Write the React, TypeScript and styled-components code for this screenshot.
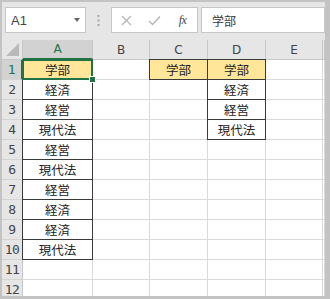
import React from "react";
import styled, { createGlobalStyle, css } from "styled-components";

const GlobalStyle = createGlobalStyle`
  html, body { margin: 0; padding: 0; background: #ffffff; }
  body { font-family: "Noto Sans CJK JP", "Noto Sans", sans-serif; }
`;

const GREEN = "#217346";

const Frame = styled.div`
  box-sizing: border-box;
  width: 330px;
  height: 299px;
  border-style: solid;
  border-color: #c3c3c3;
  border-width: 2px 5px 3px 2px;
  background: #e6e6e6;
  display: flex;
  flex-direction: column;
  overflow: hidden;
`;

const FormulaBar = styled.div`
  box-sizing: border-box;
  height: 38px;
  flex: none;
  display: flex;
  align-items: flex-start;
  padding: 5px 0 0 3px;
`;

const Box = styled.div<{ $w: number }>`
  box-sizing: border-box;
  width: ${(p) => p.$w}px;
  height: 26px;
  background: #ffffff;
  border: 1px solid #c6c6c6;
  display: flex;
  align-items: center;
  flex: none;
`;

const NameText = styled.span`
  font-family: "Liberation Sans", Arial, sans-serif;
  font-size: 13px;
  color: #444;
  padding-left: 5px;
  flex: 1;
`;

const Caret = styled.span`
  width: 0;
  height: 0;
  border-left: 3.5px solid transparent;
  border-right: 3.5px solid transparent;
  border-top: 4px solid #666;
  margin-right: 5px;
`;

const Dots = styled.div`
  width: 25px;
  height: 26px;
  flex: none;
  display: flex;
  align-items: center;
  justify-content: center;
`;

const IconSlot = styled.span<{ $w: number }>`
  width: ${(p) => p.$w}px;
  display: flex;
  align-items: center;
  justify-content: center;
  flex: none;
`;

const Fx = styled.span`
  font-family: "Liberation Serif", "Times New Roman", serif;
  font-style: italic;
  font-size: 12px;
  color: #444;
  letter-spacing: -0.5px;
`;

const Gap = styled.div<{ $w: number }>`
  width: ${(p) => p.$w}px;
  flex: none;
`;

const FormulaText = styled.span`
  font-size: 12px;
  color: #333;
  padding-left: 10px;
`;

const Sheet = styled.div`
  display: grid;
  grid-template-columns: 21px 70px 57px 58px 58px 57px 1fr;
  grid-auto-rows: 20px;
  background: #ffffff;
  flex: 1;
`;

const Corner = styled.div`
  position: relative;
  box-sizing: border-box;
  background: #e6e6e6;
  border-right: 1px solid #c8c8c8;
  border-bottom: 1px solid #c8c8c8;
  &::after {
    content: "";
    position: absolute;
    right: 3px;
    bottom: 3px;
    width: 0;
    height: 0;
    border-left: 13px solid transparent;
    border-bottom: 13px solid #b9b9b9;
  }
`;

const ColHead = styled.div<{ $sel?: boolean }>`
  box-sizing: border-box;
  display: flex;
  align-items: center;
  justify-content: center;
  font-family: "DejaVu Sans", "Liberation Sans", sans-serif;
  font-size: 12px;
  color: ${(p) => (p.$sel ? GREEN : "#444")};
  background: ${(p) => (p.$sel ? "#d2d2d2" : "#e6e6e6")};
  border-right: 1px solid #c8c8c8;
  border-bottom: ${(p) => (p.$sel ? `2px solid ${GREEN}` : "1px solid #c8c8c8")};
`;

const RowHead = styled.div<{ $sel?: boolean }>`
  box-sizing: border-box;
  display: flex;
  align-items: center;
  justify-content: center;
  font-family: "DejaVu Sans Mono", "Liberation Mono", monospace;
  font-size: 13px;
  letter-spacing: -0.5px;
  color: ${(p) => (p.$sel ? GREEN : "#444")};
  background: ${(p) => (p.$sel ? "#d2d2d2" : "#e6e6e6")};
  border-right: ${(p) => (p.$sel ? `2px solid ${GREEN}` : "1px solid #c8c8c8")};
  border-bottom: 1px solid #d4d4d4;
`;

const Cell = styled.div<{ $fill?: boolean; $boxed?: boolean; $active?: boolean }>`
  position: relative;
  box-sizing: border-box;
  display: flex;
  align-items: center;
  justify-content: center;
  font-size: 12.5px;
  color: #222;
  background: ${(p) => (p.$fill ? "#ffe699" : "#ffffff")};
  border-right: 1px solid #dadada;
  border-bottom: 1px solid #dadada;
  ${(p) =>
    p.$boxed &&
    css`
      &::before {
        content: "";
        position: absolute;
        inset: -1px -1px -1px -1px;
        border: 1px solid #3a3a3a;
        pointer-events: none;
      }
    `}
  ${(p) =>
    p.$active &&
    css`
      &::after {
        content: "";
        position: absolute;
        inset: -1px -1px -1px -1px;
        border: 2px solid ${GREEN};
        pointer-events: none;
        z-index: 2;
      }
    `}
`;

const Handle = styled.span`
  position: absolute;
  right: -4px;
  bottom: -4px;
  width: 5px;
  height: 5px;
  background: ${GREEN};
  border: 1px solid #ffffff;
  z-index: 3;
`;

const cols = ["A", "B", "C", "D", "E"];
const colA = ["学部", "経済", "経営", "現代法", "経営", "現代法", "経営", "経済", "経済", "現代法"];
const colD = ["学部", "経済", "経営", "現代法"];

export default function App() {
  const rows = Array.from({ length: 12 }, (_, i) => i);
  return (
    <>
      <GlobalStyle />
      <Frame>
        <FormulaBar>
          <Box $w={81}>
            <NameText>A1</NameText>
            <Caret />
          </Box>
          <Dots>
            <svg width="3" height="11" viewBox="0 0 3 11">
              <rect x="0.5" y="0" width="2" height="2" fill="#a8a8a8" />
              <rect x="0.5" y="4.5" width="2" height="2" fill="#a8a8a8" />
              <rect x="0.5" y="9" width="2" height="2" fill="#a8a8a8" />
            </svg>
          </Dots>
          <Box $w={87}>
            <IconSlot $w={28}>
              <svg width="11" height="11" viewBox="0 0 11 11">
                <path d="M1 1 L10 10 M10 1 L1 10" stroke="#b5b5b5" strokeWidth="1.3" fill="none" />
              </svg>
            </IconSlot>
            <IconSlot $w={28}>
              <svg width="13" height="11" viewBox="0 0 13 11">
                <path d="M1 6 L4.5 9.5 L12 1.5" stroke="#b5b5b5" strokeWidth="1.3" fill="none" />
              </svg>
            </IconSlot>
            <IconSlot $w={29}>
              <Fx>fx</Fx>
            </IconSlot>
          </Box>
          <Gap $w={3} />
          <Box $w={124}>
            <FormulaText>学部</FormulaText>
          </Box>
        </FormulaBar>
        <Sheet>
          <Corner />
          {cols.map((c) => (
            <ColHead key={c} $sel={c === "A"}>
              {c}
            </ColHead>
          ))}
          <ColHead />
          {rows.map((r) => (
            <React.Fragment key={r}>
              <RowHead $sel={r === 0}>{r + 1}</RowHead>
              <Cell $fill={r === 0} $boxed={r < 10} $active={r === 0}>
                {colA[r] ?? ""}
                {r === 0 && <Handle />}
              </Cell>
              <Cell />
              <Cell $fill={r === 0} $boxed={r === 0}>
                {r === 0 ? "学部" : ""}
              </Cell>
              <Cell $fill={r === 0} $boxed={r < 4}>
                {colD[r] ?? ""}
              </Cell>
              <Cell />
              <Cell />
            </React.Fragment>
          ))}
        </Sheet>
      </Frame>
    </>
  );
}
